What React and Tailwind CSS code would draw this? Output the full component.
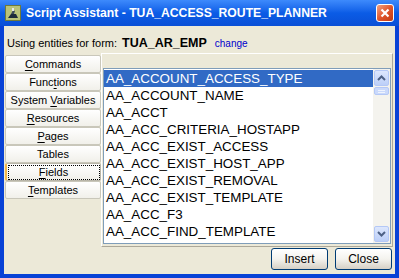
import React from "react";

const TABS = [
  { label: "Commands", key: "C", rest: "ommands" },
  { label: "Functions", pre: "Func", key: "t", rest: "ions" },
  { label: "System Variables", pre: "System ", key: "V", rest: "ariables" },
  { label: "Resources", key: "R", rest: "esources" },
  { label: "Pages", key: "P", rest: "ages" },
  { label: "Tables", pre: "Tables", key: "", rest: "" },
  { label: "Fields", key: "F", rest: "ields", active: true },
  { label: "Templates", key: "T", rest: "emplates" },
];

const FIELDS = [
  "AA_ACCOUNT_ACCESS_TYPE",
  "AA_ACCOUNT_NAME",
  "AA_ACCT",
  "AA_ACC_CRITERIA_HOSTAPP",
  "AA_ACC_EXIST_ACCESS",
  "AA_ACC_EXIST_HOST_APP",
  "AA_ACC_EXIST_REMOVAL",
  "AA_ACC_EXIST_TEMPLATE",
  "AA_ACC_F3",
  "AA_ACC_FIND_TEMPLATE",
];

function AppIcon() {
  return (
    <svg width="16" height="16" viewBox="0 0 16 16">
      <rect x="0" y="0" width="16" height="16" fill="#b9c27a" />
      <rect x="0.5" y="0.5" width="15" height="15" fill="none" stroke="#6f7a3a" />
      <path d="M3 13 L13 13 L11 9 L6 9 Z" fill="#1d2a3a" />
      <path d="M6 9 L8 5 L10 6 L9 9 Z" fill="#3c4a5a" />
      <rect x="7" y="3" width="2" height="3" fill="#e8e8e8" />
    </svg>
  );
}

function Chevron({ down }) {
  return (
    <svg width="9" height="6" viewBox="0 0 9 6">
      <path
        d={down ? "M1 1 L4.5 4.5 L8 1" : "M1 5 L4.5 1.5 L8 5"}
        fill="none"
        stroke="#4d6185"
        strokeWidth="2"
      />
    </svg>
  );
}

export default function App() {
  return (
    <div
      className="w-[399px] h-[278px] flex flex-col bg-[#0842d6] overflow-hidden"
      style={{ fontFamily: '"Liberation Sans", Arial, sans-serif' }}
    >
      <div className="h-[26px] shrink-0 flex items-center pl-[5px] pr-[5px] bg-gradient-to-b from-[#3d8afc] via-[#0b5ce6] to-[#0a4fd6]">
        <AppIcon />
        <span className="ml-[5px] text-[12.2px] font-bold text-white leading-none">
          Script Assistant - TUA_ACCESS_ROUTE_PLANNER
        </span>
        <div className="ml-auto w-[18px] h-[18px] rounded-[3px] border border-white bg-gradient-to-br from-[#f0a080] via-[#e0552c] to-[#c23a10] flex items-center justify-center">
          <svg width="10" height="10" viewBox="0 0 10 10">
            <path d="M1.5 1.5 L8.5 8.5 M8.5 1.5 L1.5 8.5" stroke="#fff" strokeWidth="2.2" />
          </svg>
        </div>
      </div>

      <div className="flex-1 mx-[4px] mb-[4px] bg-[#ece9d8] flex flex-col text-black">
        <div className="h-[27px] flex items-end pb-[4px] pl-[3px] text-[11px] leading-none">
          <span>Using entities for form:</span>
          <span className="ml-[5px] font-bold text-[12.5px]">TUA_AR_EMP</span>
          <span className="ml-[8px] text-[10px] text-[#0000cc]">change</span>
        </div>

        <div className="flex h-[194px]">
          <div className="w-[97px] pl-[1px] pt-[2px] flex flex-col">
            {TABS.map((t) => (
              <div
                key={t.label}
                className={
                  "h-[18px] flex items-center justify-center text-[11px] leading-none rounded-[2px] border bg-gradient-to-b from-white to-[#f1f0ea] " +
                  (t.active
                    ? "border-[#b8b5a8] border-l-[2px] border-l-[#f2b74a]"
                    : "border-[#c9c7ba]")
                }
              >
                <span
                  className={
                    t.active
                      ? "px-[16px] outline outline-1 outline-dotted outline-black outline-offset-[1px] w-[88px] text-center"
                      : ""
                  }
                >
                  {t.pre}
                  {t.key ? <span className="underline underline-offset-2">{t.key}</span> : null}
                  {t.rest}
                </span>
              </div>
            ))}
          </div>

          <div className="flex-1 mr-[2px] border-t border-l border-white border-r border-b border-r-[#aca899] border-b-[#aca899] pt-[14px] pl-[1px] pr-[1px] pb-[2px]">
            <div className="h-full border border-[#7f9db9] bg-white flex">
              <div className="flex-1 pt-[1px]">
                {FIELDS.map((f, i) => (
                  <div
                    key={f}
                    className={
                      "h-[17px] flex items-center pl-[2px] text-[13.4px] leading-none " +
                      (i === 0 ? "bg-[#316ac5] text-white" : "")
                    }
                  >
                    {f}
                  </div>
                ))}
              </div>
              <div className="w-[17px] bg-[#f4f3ee] flex flex-col justify-between p-[1px]">
                <div className="flex flex-col">
                  <div className="h-[16px] rounded-[2px] border border-[#b4c8f6] bg-gradient-to-b from-[#dde7fd] to-[#bccff8] flex items-center justify-center">
                    <Chevron />
                  </div>
                  <div className="h-[8px] mt-[1px] rounded-[2px] border border-[#b4c8f6] bg-[#cad9fb] flex flex-col items-center justify-center gap-[1px]">
                    <div className="w-[7px] h-px bg-[#eef3fe]" />
                    <div className="w-[7px] h-px bg-[#eef3fe]" />
                  </div>
                </div>
                <div className="h-[16px] rounded-[2px] border border-[#b4c8f6] bg-gradient-to-b from-[#dde7fd] to-[#bccff8] flex items-center justify-center">
                  <Chevron down />
                </div>
              </div>
            </div>
          </div>
        </div>

        <div className="flex justify-end gap-[7px] pr-[3px] pt-[1px]">
          {["Insert", "Close"].map((b) => (
            <button
              key={b}
              type="button"
              className="w-[57px] h-[22px] rounded-[3px] border border-[#003c74] bg-gradient-to-b from-white via-[#f4f3ee] to-[#d6d0c5] text-[12px] leading-none text-black"
            >
              {b}
            </button>
          ))}
        </div>
      </div>
    </div>
  );
}
